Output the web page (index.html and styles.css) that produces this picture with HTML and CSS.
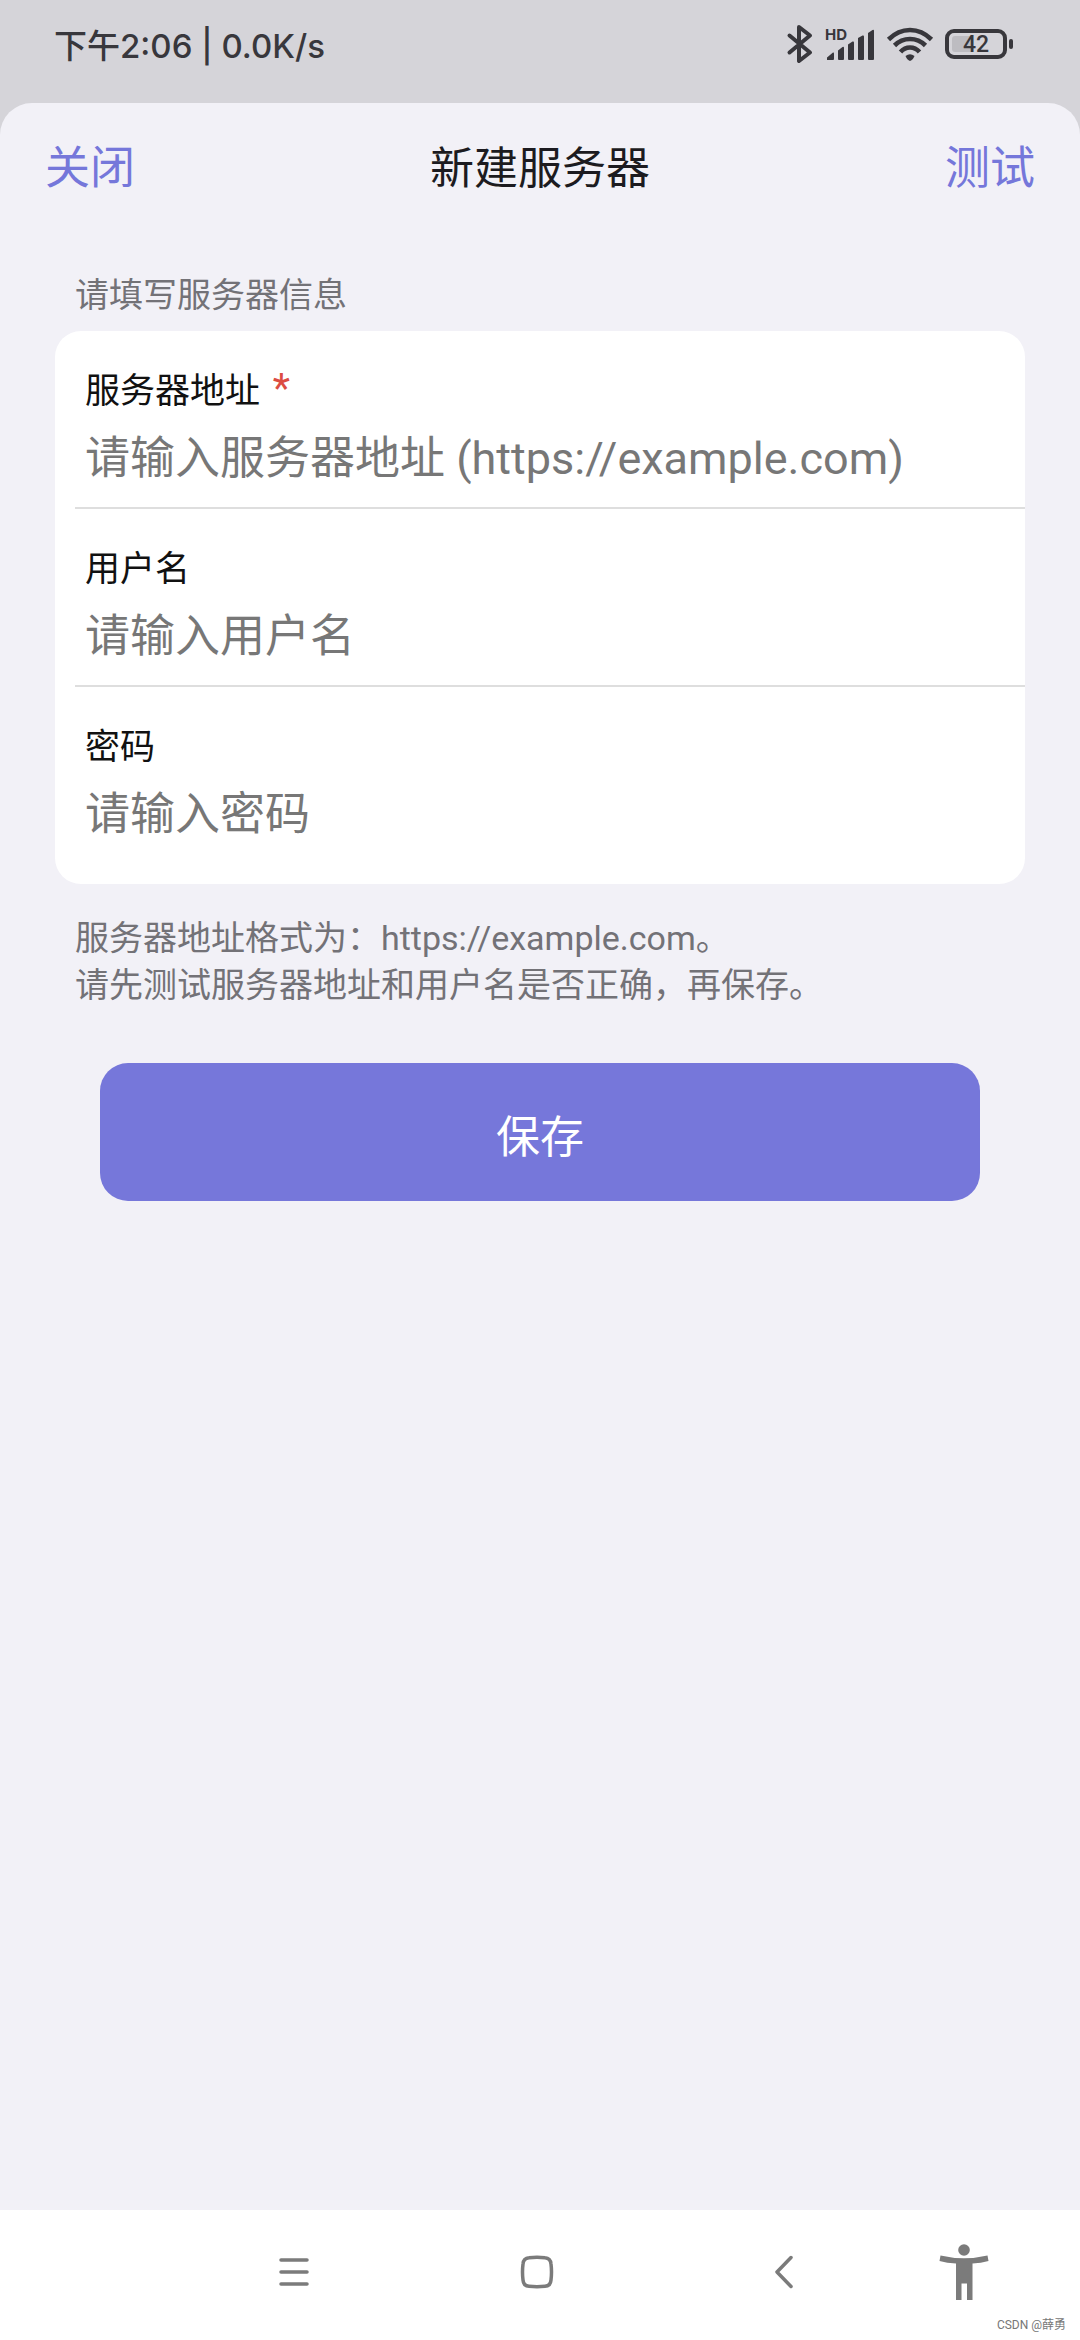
FILE: index.html
```html
<!DOCTYPE html>
<html lang="zh-CN">
<head>
    <meta charset="UTF-8">
    <meta name="viewport" content="width=device-width, initial-scale=1.0">
    <title>新建服务器</title>
    <link rel="stylesheet" href="styles.css">
</head>
<body>
    <div class="status-bar">
        <span class="status-time">下午2:06 | 0.0K/s</span>
        <div class="status-icons">
            <svg width="26" height="40" viewBox="0 0 26 40" fill="none" stroke="#38373c" stroke-width="4" stroke-linejoin="round" stroke-linecap="round">
                <path d="M2.5 11.5L23 28.5L12 37V3L23 11.5L2.5 28.5"/>
            </svg>
            <svg width="50" height="36" viewBox="0 0 50 36" fill="#38373c">
                <text class="hd" x="0" y="14">HD</text>
                <path d="M2 34V31.500L8 26.500Q9 26 9 27.500V33Q9 34 8 34H3Q2 34 2 34Z"/>
                <path d="M13 33V24.500L17.500 21Q19 20 19 22V33Q19 34 18 34H14Q13 34 13 33Z"/>
                <path d="M23 33V18.500L27.500 15.500Q29 15 29 16.500V33Q29 34 28 34H24Q23 34 23 33Z"/>
                <path d="M33 33V12L37.500 9.500Q39 9 39 10.500V33Q39 34 38 34H34Q33 34 33 33Z"/>
                <path d="M43 33V7L47.500 4Q49 3 49 5V33Q49 34 48 34H44Q43 34 43 33Z"/>
            </svg>
            <svg width="46" height="36" viewBox="0 0 46 36" fill="none" stroke="#38373c" stroke-width="4.600">
                <path d="M1.500 13.500Q11 4 23 4T44.500 13.500"/>
                <path d="M7.500 19.500Q14 13 23 13T38.500 19.500"/>
                <path d="M13.500 26Q17.500 21.500 23 21.500T32.500 26"/>
                <path d="M18.500 30Q23 26.500 27.500 30Q26 34 23 35Q20 34 18.500 30Z" fill="#38373c" stroke="none"/>
            </svg>
            <svg width="70" height="30" viewBox="0 0 70 30">
                <rect x="2" y="2" width="58" height="26" rx="7" fill="none" stroke="#38373c" stroke-width="4"/>
                <path d="M10 7H28V23H10Q7 23 7 20V10Q7 7 10 7Z" fill="#bdbcc1"/>
                <rect x="64" y="10" width="4" height="10" rx="2" fill="#38373c"/>
                <text class="battery-level" x="31" y="23" text-anchor="middle">42</text>
            </svg>
        </div>
    </div>

    <main class="sheet">
        <header class="sheet-header">
            <button type="button" class="link-button">关闭</button>
            <h1>新建服务器</h1>
            <button type="button" class="link-button">测试</button>
        </header>

        <form class="server-form">
            <p class="note">请填写服务器信息</p>
            <div class="card">
                <div class="field">
                    <label for="address">服务器地址 <span class="required">*</span></label>
                    <input type="text" id="address" placeholder="请输入服务器地址 (https://example.com)">
                </div>
                <div class="field">
                    <label for="username">用户名</label>
                    <input type="text" id="username" placeholder="请输入用户名">
                </div>
                <div class="field">
                    <label for="password">密码</label>
                    <input type="password" id="password" placeholder="请输入密码">
                </div>
            </div>
            <p class="note">服务器地址格式为：https://example.com。<br>请先测试服务器地址和用户名是否正确，再保存。</p>
            <button type="button" class="save-button">保存</button>
        </form>
    </main>

    <nav class="nav-bar">
        <button type="button" class="nav-recent" aria-label="最近任务">
            <svg width="32" height="32" viewBox="0 0 32 32" stroke="#7b7b7b" stroke-width="3.500" stroke-linecap="round">
                <path d="M3 4H29M3 16H29M3 28H29"/>
            </svg>
        </button>
        <button type="button" aria-label="主屏幕">
            <svg width="34" height="34" viewBox="0 0 34 34" fill="none" stroke="#7b7b7b" stroke-width="3.500">
                <path d="M9 2.700Q17 2 25 2.700Q30.500 3 31 9Q32 17 31 25Q30.500 31 25 31.300Q17 32 9 31.300Q3.500 31 3 25Q2 17 3 9Q3.500 3 9 2.700Z"/>
            </svg>
        </button>
        <button type="button" aria-label="返回">
            <svg width="20" height="34" viewBox="0 0 20 34" fill="none" stroke="#7b7b7b" stroke-width="3.500" stroke-linecap="round" stroke-linejoin="round">
                <path d="M17 2.500L3 17L17 31.500"/>
            </svg>
        </button>
        <button type="button" aria-label="无障碍">
            <svg width="50" height="56" viewBox="0 0 50 56" fill="#7b7b7b">
                <circle cx="25" cy="6" r="5.800"/>
                <path d="M1.500 11.500Q25 17 48.500 11.500L49.500 17Q42 19 33.500 19.500V56H28V39.500H22.500V56H17V19.500Q8 19 .5 17Z"/>
            </svg>
        </button>
        <span class="watermark">CSDN @薛勇</span>
    </nav>
</body>
</html>
```

FILE: styles.css
```css
* {
    box-sizing: border-box;
}

body {
    font-family: Roboto, "Noto Sans CJK SC", sans-serif;
    margin: 0;
    display: flex;
    flex-direction: column;
    min-height: 100vh;
    background-color: #d5d4d9;
    color: #1c1b20;
}

h1, p {
    margin: 0;
    font-weight: 400;
}

button {
    padding: 0;
    border: none;
    background: none;
    font-family: inherit;
}

.status-bar {
    display: flex;
    align-items: center;
    justify-content: space-between;
    height: 88px;
    margin-bottom: 15px;
    padding: 0 65px 0 54px;
}

.status-time {
    font-family: Inter, "Noto Sans CJK SC", sans-serif;
    font-size: 33px;
    font-weight: 500;
    color: #38373c;
}

.status-icons {
    display: flex;
    align-items: center;
    gap: 12px;
}

.status-icons svg {
    overflow: visible;
}

.hd {
    font-family: Inter, sans-serif;
    font-size: 15px;
    font-weight: 700;
}

.battery-level {
    font-family: Roboto, sans-serif;
    font-size: 23px;
    font-weight: 500;
    fill: #38373c;
}

.sheet {
    flex: 1;
    background-color: #f2f1f7;
    border-radius: 32px 32px 0 0;
}

.sheet-header {
    display: flex;
    align-items: center;
    justify-content: space-between;
    height: 128px;
    padding: 0 45px 5px;
}

.sheet-header h1 {
    font-size: 44px;
}

.link-button {
    font-size: 45px;
    color: #7577da;
}

.server-form {
    padding: 41px 55px 54px;
}

.note {
    padding: 0 20px;
    font-size: 34px;
    line-height: 47px;
    color: #737277;
}

.card {
    margin: 12px 0 31px;
    padding: 0 0 21px 20px;
    background-color: #fff;
    border-radius: 26px;
}

.field {
    display: flex;
    flex-direction: column;
    padding: 38px 10px 6px;
    border-bottom: 2px solid #dedede;
}

.field:last-child {
    border-bottom: none;
}

.field label {
    font-size: 35px;
    line-height: 46px;
    color: #111;
}

.required {
    margin-left: 4px;
    font-size: 40px;
    line-height: 1;
    vertical-align: top;
    color: #dc4c42;
}

.field input {
    width: 100%;
    height: 86px;
    padding: 0;
    border: none;
    outline: none;
    background: none;
    font-family: inherit;
    font-size: 45px;
    color: #111;
}

.field input::placeholder {
    color: #777;
    opacity: 1;
}

.save-button {
    display: block;
    width: calc(100% - 90px);
    height: 138px;
    margin: 54px auto 0;
    padding-top: 4px;
    border-radius: 28px;
    background-color: #7677da;
    font-size: 44px;
    color: #fff;
}

.nav-bar {
    position: relative;
    display: grid;
    grid-template-columns: 172fr 243fr 243fr 252fr 108fr 62fr;
    height: 130px;
    padding-bottom: 6px;
    background-color: #fff;
}

.nav-bar button {
    display: flex;
    align-items: center;
    justify-content: center;
}

.nav-recent {
    grid-column: 2;
}

.watermark {
    position: absolute;
    right: 14px;
    bottom: 8px;
    font-size: 12px;
    color: #777;
}
```
